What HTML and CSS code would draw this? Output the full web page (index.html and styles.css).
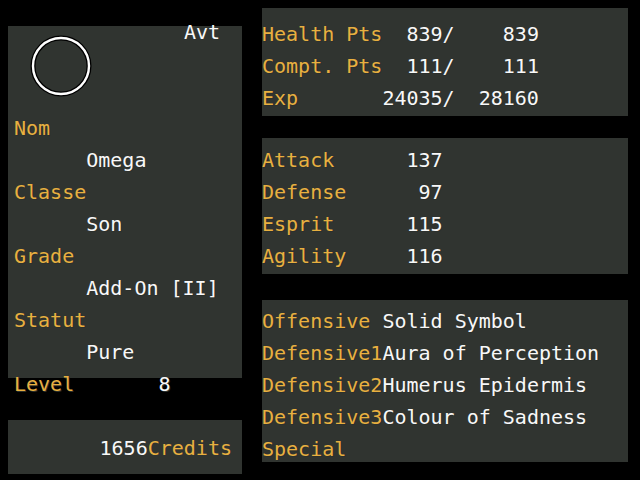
FILE: index.html
```html
<!DOCTYPE html>
<html lang="en">
<head>
  <meta charset="UTF-8">
  <title>Status</title>
  <link rel="stylesheet" href="styles.css">
</head>
<body>

<div id="screen">
  <div class="col-left">
    <div class="panel profile">
      <div class="profile-head">
        <svg class="avatar" width="64" height="64" viewBox="0 0 64 64">
          <circle cx="32" cy="32" r="28" fill="none" stroke="#000" stroke-width="5"/>
          <circle cx="32" cy="32" r="28" fill="none" stroke="#fff" stroke-width="2.4"/>
        </svg>
        <span class="avt">Avt</span>
      </div>
      <div class="line gold">Nom</div>
      <div class="line indent">Omega</div>
      <div class="line gold">Classe</div>
      <div class="line indent">Son</div>
      <div class="line gold">Grade</div>
      <div class="line indent">Add-On [II]</div>
      <div class="line gold">Statut</div>
      <div class="line indent">Pure</div>
    </div>
    <div class="line level"><span class="gold lbl-level">Level</span><span>8</span></div>
    <div class="panel credits">
      <span>1656</span><span class="gold">Credits</span>
    </div>
  </div>

  <div class="col-right">
    <div class="panel points">
      <div class="line"><span class="gold lbl">Health Pts</span><span class="num w6">839/</span><span class="num w7">839</span></div>
      <div class="line"><span class="gold lbl">Compt. Pts</span><span class="num w6">111/</span><span class="num w7">111</span></div>
      <div class="line"><span class="gold lbl">Exp</span><span class="num w6">24035/</span><span class="num w7">28160</span></div>
    </div>

    <div class="panel stats">
      <div class="line"><span class="gold lbl">Attack</span><span class="num w5">137</span></div>
      <div class="line"><span class="gold lbl">Defense</span><span class="num w5">97</span></div>
      <div class="line"><span class="gold lbl">Esprit</span><span class="num w5">115</span></div>
      <div class="line"><span class="gold lbl">Agility</span><span class="num w5">116</span></div>
    </div>

    <div class="panel skills">
      <div class="line"><span class="gold lbl">Offensive</span><span>Solid Symbol</span></div>
      <div class="line"><span class="gold lbl">Defensive1</span><span>Aura of Perception</span></div>
      <div class="line"><span class="gold lbl">Defensive2</span><span>Humerus Epidermis</span></div>
      <div class="line"><span class="gold lbl">Defensive3</span><span>Colour of Sadness</span></div>
      <div class="line"><span class="gold lbl">Special</span></div>
    </div>
  </div>
</div>

</body>
</html>
```

FILE: styles.css
```css
body {
  margin: 0;
  background-color: #000;
  font-family: 'DejaVu Sans Mono', 'Liberation Mono', monospace;
  font-size: 20px;
  color: #f8f8f8;
}

#screen {
  width: 640px;
  height: 480px;
  display: flex;
  overflow: hidden;
}

.panel {
  background-color: #303430;
  box-sizing: border-box;
}

.line {
  height: 32px;
  line-height: 32px;
  white-space: pre;
  text-shadow: 1px 1px 0 #2c302c;
}

.gold {
  color: #e8b040;
}

/* left column */
.col-left {
  width: 234px;
  margin-left: 8px;
  margin-top: 26px;
}

.profile {
  height: 352px;
  padding-left: 6px;
}

.profile-head {
  height: 86px;
  display: flex;
  justify-content: space-between;
  align-items: flex-start;
}

.avatar {
  margin: 8px 0 0 15px;
}

.avt {
  margin-top: -10px;
  margin-right: 22px;
  line-height: 32px;
}

.indent {
  padding-left: 6ch;
}

.level {
  margin-top: -10px;
  padding-left: 6px;
}

.lbl-level {
  display: inline-block;
  width: 12ch;
}

.credits {
  margin-top: 20px;
  height: 54px;
  padding: 12px 10px 0 0;
  line-height: 32px;
  text-align: right;
}

/* right column */
.col-right {
  width: 366px;
  margin-left: 20px;
  margin-top: 8px;
}

.points {
  height: 108px;
  padding-top: 10px;
}

.stats {
  margin-top: 22px;
  height: 136px;
  padding-top: 6px;
}

.skills {
  margin-top: 26px;
  height: 162px;
  padding-top: 5px;
}

.lbl {
  display: inline-block;
  width: 10ch;
}

.num {
  display: inline-block;
  text-align: right;
}

.w5 { width: 5ch; }
.w6 { width: 6ch; }
.w7 { width: 7ch; }
```
